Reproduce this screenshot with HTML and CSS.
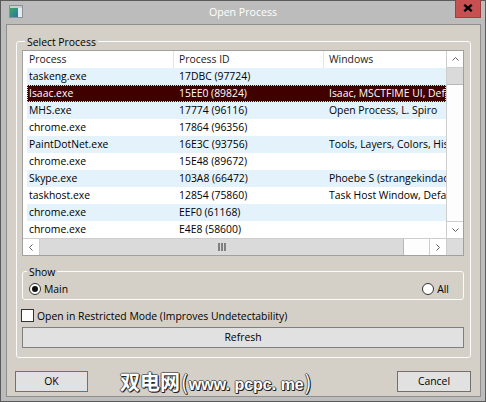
FILE: index.html
```html
<!DOCTYPE html>
<html>
<head>
<meta charset="utf-8">
<title>Open Process</title>
<link rel="stylesheet" href="styles.css">
</head>
<body>
<div class="window">
  <div class="titlebar">
    <svg class="app-icon" width="14" height="13" viewBox="0 0 14 13">
      <defs>
        <linearGradient id="ig" x1="0" y1="0" x2="1" y2="1">
          <stop offset="0" stop-color="#3fa35a"/>
          <stop offset="0.55" stop-color="#2f8f8a"/>
          <stop offset="1" stop-color="#2b6db3"/>
        </linearGradient>
      </defs>
      <rect x="0.5" y="0.5" width="13" height="12" fill="#e4eaed" stroke="#8b9195"/>
      <rect x="1" y="1" width="12" height="2" fill="#c9ced1"/>
      <rect x="1" y="3" width="8" height="9" fill="url(#ig)"/>
    </svg>
    <div class="title">Open Process</div>
    <div class="close">
      <svg width="10" height="8" viewBox="0 0 10 8"><path d="M1.2 0.8 L8.8 7.2 M8.8 0.8 L1.2 7.2" stroke="#000" stroke-width="2.3" fill="none"/></svg>
    </div>
  </div>

  <div class="client">
    <div class="group main-group">
      <div class="legend">Select Process</div>
      <div class="list">
        <div class="view">
          <div class="header">
            <div class="hcell h1">Process</div>
            <div class="hcell h2">Process ID</div>
            <div class="hcell h3">Windows</div>
          </div>
          <div class="rows">
            <div class="row alt"><span class="cell c1">taskeng.exe</span><span class="cell c2">17DBC (97724)</span><span class="cell c3"></span></div>
            <div class="row selected"><span class="cell c1">Isaac.exe</span><span class="cell c2">15EE0 (89824)</span><span class="cell c3">Isaac, MSCTFIME UI, Default IME</span></div>
            <div class="row alt"><span class="cell c1">MHS.exe</span><span class="cell c2">17774 (96116)</span><span class="cell c3">Open Process, L. Spiro</span></div>
            <div class="row"><span class="cell c1">chrome.exe</span><span class="cell c2">17864 (96356)</span><span class="cell c3"></span></div>
            <div class="row alt"><span class="cell c1">PaintDotNet.exe</span><span class="cell c2">16E3C (93756)</span><span class="cell c3">Tools, Layers, Colors, History</span></div>
            <div class="row"><span class="cell c1">chrome.exe</span><span class="cell c2">15E48 (89672)</span><span class="cell c3"></span></div>
            <div class="row alt"><span class="cell c1">Skype.exe</span><span class="cell c2">103A8 (66472)</span><span class="cell c3">Phoebe S (strangekindadork) - Skype</span></div>
            <div class="row"><span class="cell c1">taskhost.exe</span><span class="cell c2">12854 (75860)</span><span class="cell c3">Task Host Window, Default IME</span></div>
            <div class="row alt"><span class="cell c1">chrome.exe</span><span class="cell c2">EEF0 (61168)</span><span class="cell c3"></span></div>
            <div class="row"><span class="cell c1">chrome.exe</span><span class="cell c2">E4E8 (58600)</span><span class="cell c3"></span></div>
          </div>
        </div>
        <div class="vscroll">
          <div class="sb-btn vs-up"><svg width="7" height="4" viewBox="0 0 7 4"><polyline points="0.5,3.5 3.5,0.5 6.5,3.5" fill="none" stroke="#606060"/></svg></div>
          <div class="vthumb"></div>
          <div class="track"></div>
          <div class="sb-btn vs-down"><svg width="7" height="4" viewBox="0 0 7 4"><polyline points="0.5,0.5 3.5,3.5 6.5,0.5" fill="none" stroke="#606060"/></svg></div>
        </div>
        <div class="hscroll">
          <div class="sb-btn hs-left"><svg width="4" height="7" viewBox="0 0 4 7"><polyline points="3.5,0.5 0.5,3.5 3.5,6.5" fill="none" stroke="#606060"/></svg></div>
          <div class="hthumb"><svg width="8" height="8" viewBox="0 0 8 8"><path d="M1 0 V8 M4 0 V8 M7 0 V8" stroke="#5a5a5a" stroke-width="1.4"/></svg></div>
          <div class="track"></div>
          <div class="sb-btn hs-right"><svg width="4" height="7" viewBox="0 0 4 7"><polyline points="0.5,0.5 3.5,3.5 0.5,6.5" fill="none" stroke="#606060"/></svg></div>
        </div>
        <div class="corner"></div>
      </div>

      <div class="group show-group">
        <div class="legend">Show</div>
        <div class="radio-row">
          <label class="radio"><span class="radio-dot checked"></span><span>Main</span></label>
          <label class="radio"><span class="radio-dot"></span><span>All</span></label>
        </div>
      </div>

      <label class="check-row"><span class="checkbox"></span><span>Open in Restricted Mode (Improves Undetectability)</span></label>

      <div class="button refresh">Refresh</div>
    </div>

    <div class="bottom-row">
      <div class="button ok">OK</div>
      <div class="watermark"><span class="wm-cjk">双电网</span><span class="wm-paren">(</span><span class="wm-latin">www. pcpc. me</span><span class="wm-paren">)</span></div>
      <div class="button cancel">Cancel</div>
    </div>
  </div>
</div>
</body>
</html>
```

FILE: styles.css
```css
* { box-sizing: border-box; }
html, body { margin: 0; padding: 0; }
body {
  width: 486px;
  height: 402px;
  overflow: hidden;
  background: #bcbcbc;
  font-family: "Open Sans", "Noto Sans", sans-serif;
  font-size: 10.4px;
  color: #000;
}

.window {
  width: 486px;
  height: 402px;
  border: 1px solid #5a5a5a;
  background: #bcbcbc;
  display: flex;
  flex-direction: column;
}

.titlebar {
  height: 23px;
  display: grid;
  grid-template-columns: 1fr auto 1fr;
  align-items: start;
}
.app-icon { display: block; margin: 4px 0 0 8px; }
.title {
  color: #fff;
  line-height: 23px;
  font-size: 10.6px;
}
.close {
  justify-self: end;
  margin: -1px 4px 0 0;
  width: 26px;
  height: 18px;
  background: #c75050;
  border: 1px solid #9c3f3f;
  border-top: none;
  display: flex;
  align-items: center;
  justify-content: center;
}
.close svg { display: block; margin-top: -1px; }

.client {
  flex: 1;
  margin: 0 4px 4px 5px;
  border: 1px solid #8f8f8f;
  background: #d4d0c8;
  padding: 16px 9px 0 9px;
  display: flex;
  flex-direction: column;
}

.group {
  border: 1px solid #fbfbfb;
  border-radius: 3px;
}
.legend {
  display: table;
  line-height: 14px;
  padding: 0 2px;
  margin: -7px 0 0 3px;
  background: #d4d0c8;
}
.main-group {
  padding: 0 6px 9px 5px;
}

.list {
  margin-top: 1px;
  height: 206px;
  border: 1px solid #a0a0a0;
  background: #fff;
  display: grid;
  grid-template-columns: 423px 17px;
  grid-template-rows: 187px 17px;
}
.view { overflow: hidden; }
.header { display: flex; height: 17px; }
.hcell {
  line-height: 17px;
  white-space: nowrap;
  overflow: hidden;
  color: #1a1a1a;
}
.h1 { width: 151px; padding-left: 6px; border-right: 1px solid #e5e5e5; }
.h2 { width: 150px; padding-left: 5px; border-right: 1px solid #e5e5e5; }
.h3 { width: 122px; padding-left: 5px; }

.rows { margin-left: 4px; }
.row { display: flex; height: 17px; }
.row.alt { background: #e3f2fb; }
.row.selected {
  background: #400000;
  color: #fff;
  outline: 1px dotted #d8d8d8;
  outline-offset: -1px;
}
.cell {
  line-height: 17px;
  white-space: nowrap;
  overflow: hidden;
  text-overflow: clip;
}
.c1 { width: 147px; padding-left: 2px; }
.c2 { width: 150px; padding-left: 5px; }
.c3 { width: 122px; padding-left: 5px; }

.sb-btn {
  background: #fff;
  display: flex;
  align-items: center;
  justify-content: center;
  flex: none;
}
.sb-btn svg { display: block; }
.track { flex: 1; background: #fdfdfd; }

.vscroll {
  display: flex;
  flex-direction: column;
  border-left: 1px solid #cdcdcd;
}
.vs-up { height: 17px; border-bottom: 1px solid #cdcdcd; }
.vs-down { height: 17px; border-top: 1px solid #cdcdcd; }
.vthumb {
  height: 17px;
  background: #dadada;
  border-bottom: 1px solid #b8b8b8;
  flex: none;
}

.hscroll {
  display: flex;
  border-top: 1px solid #cdcdcd;
}
.hs-left { width: 17px; border-right: 1px solid #cdcdcd; }
.hs-right { width: 17px; border-left: 1px solid #cdcdcd; }
.hthumb {
  width: 364px;
  flex: none;
  background: #dadada;
  border-right: 1px solid #b8b8b8;
  display: flex;
  align-items: center;
  justify-content: center;
}
.hthumb svg { display: block; }
.corner {
  background: #dcdcdc;
  border-top: 1px solid #cdcdcd;
  border-left: 1px solid #cdcdcd;
}

.show-group {
  margin-top: 15px;
  height: 29px;
}
.show-group .legend { margin-left: 4px; }
.radio-row {
  height: 20px;
  display: flex;
  align-items: center;
  justify-content: space-between;
  padding: 0 14px 0 6px;
}
.radio {
  display: flex;
  align-items: center;
  gap: 3px;
}
.radio-dot {
  width: 12px;
  height: 12px;
  border: 1px solid #333;
  border-radius: 50%;
  background: #fff;
  display: flex;
  align-items: center;
  justify-content: center;
}
.radio-dot.checked::after {
  content: "";
  width: 6px;
  height: 6px;
  border-radius: 50%;
  background: #111;
}

.check-row {
  margin-top: 8px;
  height: 15px;
  display: flex;
  align-items: center;
  gap: 3px;
}
.checkbox {
  width: 13px;
  height: 13px;
  margin-left: -1px;
  border: 1px solid #333;
  background: #fff;
}

.button {
  height: 21px;
  line-height: 19px;
  text-align: center;
  background: #e1e1e1;
  border: 1px solid #7f7f7f;
}
.refresh { margin-top: 4px; }

.bottom-row {
  margin-top: 9px;
  display: flex;
  align-items: center;
}
.ok {
  width: 73px;
  margin-left: -1px;
  border-color: #3c7fb1;
}
.cancel {
  width: 74px;
  margin-left: auto;
  border-color: #707070;
}
.watermark {
  margin-left: 32px;
  color: #fff;
  font-weight: bold;
  white-space: nowrap;
  display: flex;
  align-items: baseline;
  text-shadow: 1px 1px 0 #1e1e1e, 1px 0 0 #3a3a3a, 0 1px 0 #3a3a3a, -1px 0 0 #6a6a6a, 0 -1px 0 #6a6a6a;
}
.wm-cjk {
  font-family: "Noto Sans CJK SC", sans-serif;
  font-size: 20px;
}
.wm-paren {
  font-family: "Noto Sans CJK SC", sans-serif;
  font-size: 20px;
  font-weight: normal;
  margin: 0 1px;
}
.wm-latin {
  font-family: "Liberation Sans", Arial, sans-serif;
  font-size: 16px;
}
```
